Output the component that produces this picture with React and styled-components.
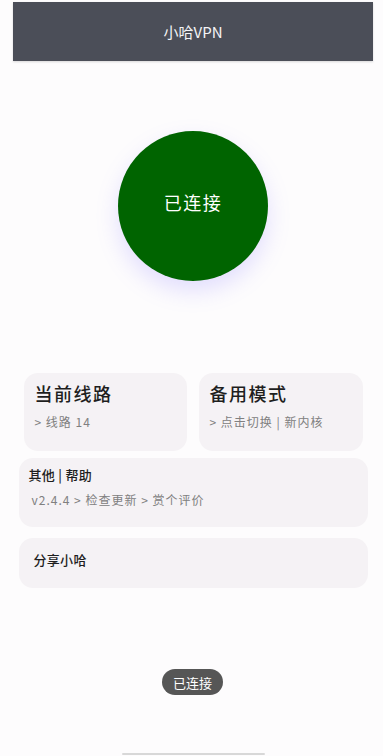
import styled, { createGlobalStyle } from 'styled-components'

const Global = createGlobalStyle`
  body {
    margin: 0;
    background: #fdfcfd;
    font-family: "Noto Sans CJK SC", "Noto Sans", sans-serif;
  }
`

const Page = styled.div`
  width: 383px;
  height: 756px;
  box-sizing: border-box;
  padding-left: 3px;
  position: relative;
  overflow: hidden;
  display: flex;
  flex-direction: column;
  align-items: center;
`

const TopBar = styled.div`
  margin-top: 2px;
  width: 360px;
  height: 59px;
  background: #4b4e58;
  color: #f4f4f6;
  font-size: 15px;
  display: flex;
  align-items: center;
  justify-content: center;
  box-shadow: 0 1px 2px rgba(0, 0, 0, 0.15);
`

const Circle = styled.div`
  margin-top: 70px;
  width: 150px;
  height: 150px;
  box-sizing: border-box;
  padding-bottom: 8px;
  border-radius: 50%;
  background: #006400;
  color: #fff;
  font-size: 18px;
  letter-spacing: 1.5px;
  display: flex;
  align-items: center;
  justify-content: center;
  box-shadow: 0 10px 22px rgba(130, 120, 255, 0.22);
`

const Grid = styled.div`
  margin-top: 92px;
  width: 339px;
  display: grid;
  grid-template-columns: 163px 164px;
  column-gap: 12px;
`

const Card = styled.div`
  background: #f5f2f5;
  border-radius: 14px;
  height: 78px;
  box-sizing: border-box;
  padding: 6px 10px 0 11px;
`

const BigTitle = styled.div`
  font-size: 18px;
  font-weight: 500;
  color: #1e1e1e;
  line-height: 28px;
  letter-spacing: 1.5px;
`

const Sub = styled.div`
  font-size: 12px;
  color: #808080;
  margin-top: ${p => p.$gap || 6}px;
  padding-left: ${p => p.$indent || 0}px;
  line-height: 18px;
  letter-spacing: 1px;
`

const Wide = styled.div`
  width: 349px;
  margin-top: ${p => p.$top}px;
  height: ${p => p.$h}px;
  background: #f5f2f5;
  border-radius: 14px;
  box-sizing: border-box;
  padding: ${p => p.$pad};
`

const SmallTitle = styled.div`
  font-size: 13px;
  font-weight: 500;
  color: #1e1e1e;
  line-height: 18px;
  letter-spacing: 0.3px;
`

const Toast = styled.div`
  position: absolute;
  left: 162px;
  top: 669px;
  height: 26px;
  padding: 0 11px;
  border-radius: 13px;
  background: #565656;
  color: #fff;
  font-size: 13px;
  display: flex;
  align-items: center;
`

const Handle = styled.div`
  position: absolute;
  left: 122px;
  bottom: 1px;
  width: 143px;
  height: 2px;
  background: #d8d8d8;
  border-radius: 1px;
`

export default function App() {
  return (
    <>
      <Global />
      <Page>
        <TopBar>小哈VPN</TopBar>
        <Circle>已连接</Circle>
        <Grid>
          <Card>
            <BigTitle>当前线路</BigTitle>
            <Sub>&gt; 线路 14</Sub>
          </Card>
          <Card>
            <BigTitle>备用模式</BigTitle>
            <Sub>&gt; 点击切换 | 新内核</Sub>
          </Card>
        </Grid>
        <Wide $top={7} $h={69} $pad="8px 10px 0 10px">
          <SmallTitle>其他 | 帮助</SmallTitle>
          <Sub $gap={7} $indent={3}>v2.4.4 &gt; 检查更新 &gt; 赏个评价</Sub>
        </Wide>
        <Wide $top={11} $h={50} $pad="13px 15px 0 15px">
          <SmallTitle>分享小哈</SmallTitle>
        </Wide>
        <Toast>已连接</Toast>
        <Handle />
      </Page>
    </>
  )
}
